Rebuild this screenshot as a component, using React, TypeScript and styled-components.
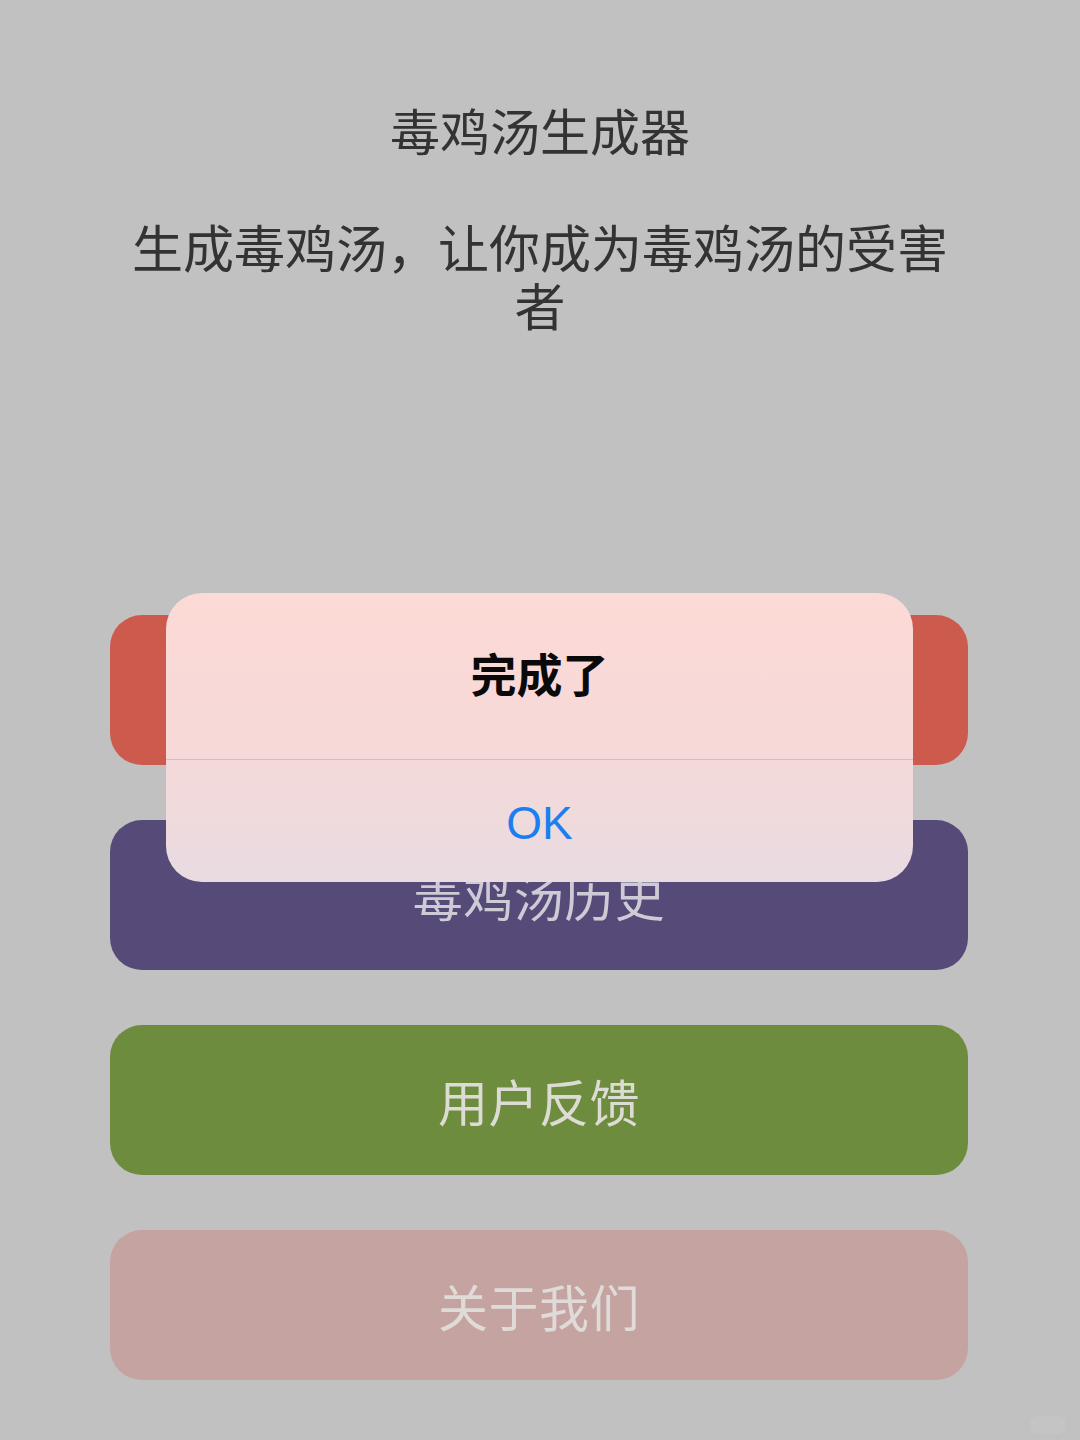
import styled, { createGlobalStyle } from 'styled-components';

const GlobalStyle = createGlobalStyle`
  html, body {
    margin: 0;
    padding: 0;
    background: #c1c1c1;
  }
  body {
    font-family: "Noto Sans CJK SC", "Noto Sans", sans-serif;
  }
`;

type ButtonProps = {
  $bg: string;
  $fg: string;
};

const Page = styled.div`
  position: relative;
  width: 1080px;
  height: 1440px;
  padding-top: 99px;
  box-sizing: border-box;
  background: #c1c1c1;
  overflow: hidden;
`;

const Title = styled.h1`
  margin: 0;
  font-size: 50px;
  font-weight: 400;
  line-height: 60px;
  text-align: center;
  color: #333333;
`;

const Subtitle = styled.p`
  margin: 58px auto 0;
  width: 850px;
  font-size: 51px;
  line-height: 58px;
  text-align: center;
  color: #333333;
`;

const ButtonList = styled.div`
  display: flex;
  flex-direction: column;
  gap: 55px;
  margin: 282px 112px 0 110px;
`;

const MenuButton = styled.div<ButtonProps>`
  display: flex;
  align-items: center;
  justify-content: center;
  height: 150px;
  border-radius: 32px;
  background: ${({ $bg }) => $bg};
  color: ${({ $fg }) => $fg};
  font-size: 50px;
  letter-spacing: 0.5px;
`;

const Alert = styled.div`
  position: absolute;
  top: 593px;
  left: 166px;
  width: 747px;
  height: 289px;
  border-radius: 36px;
  overflow: hidden;
  display: flex;
  flex-direction: column;
  background: linear-gradient(180deg, #fcdad6 0%, #f6d9d8 55%, #e8dbe1 100%);
`;

const AlertTitle = styled.div`
  height: 167px;
  padding-bottom: 8px;
  display: flex;
  align-items: center;
  justify-content: center;
  font-size: 46px;
  font-weight: 700;
  color: #0a0a0a;
  border-bottom: 1.5px solid #dcbcbc;
  box-sizing: border-box;
`;

const AlertAction = styled.div`
  flex: 1;
  display: flex;
  align-items: center;
  justify-content: center;
  padding-top: 4px;
  font-family: "Liberation Sans", "Noto Sans", sans-serif;
  font-size: 46px;
  color: #1a7ff0;
`;

const Badge = styled.div`
  position: absolute;
  right: 14px;
  bottom: 6px;
  width: 36px;
  height: 18px;
  border-radius: 8px;
  background: rgba(200, 200, 200, 0.5);
`;

// the first button sits under the alert, so its label is left out
const buttons = [
  { key: 'generate', label: '', bg: '#cd5b4d', fg: '#e6d2cc' },
  { key: 'history', label: '毒鸡汤历史', bg: '#554a78', fg: '#cfcbd6' },
  { key: 'feedback', label: '用户反馈', bg: '#6d8c3e', fg: '#dcdcd4' },
  { key: 'about', label: '关于我们', bg: '#c5a3a1', fg: '#dedbd9' }
];

export default function App() {
  return (
    <>
      <GlobalStyle />
      <Page>
        <Title>毒鸡汤生成器</Title>
        <Subtitle>生成毒鸡汤，让你成为毒鸡汤的受害者</Subtitle>
        <ButtonList>
          {buttons.map((b) => (
            <MenuButton key={b.key} $bg={b.bg} $fg={b.fg}>
              {b.label}
            </MenuButton>
          ))}
        </ButtonList>
        <Alert>
          <AlertTitle>完成了</AlertTitle>
          <AlertAction>OK</AlertAction>
        </Alert>
        <Badge />
      </Page>
    </>
  );
}
